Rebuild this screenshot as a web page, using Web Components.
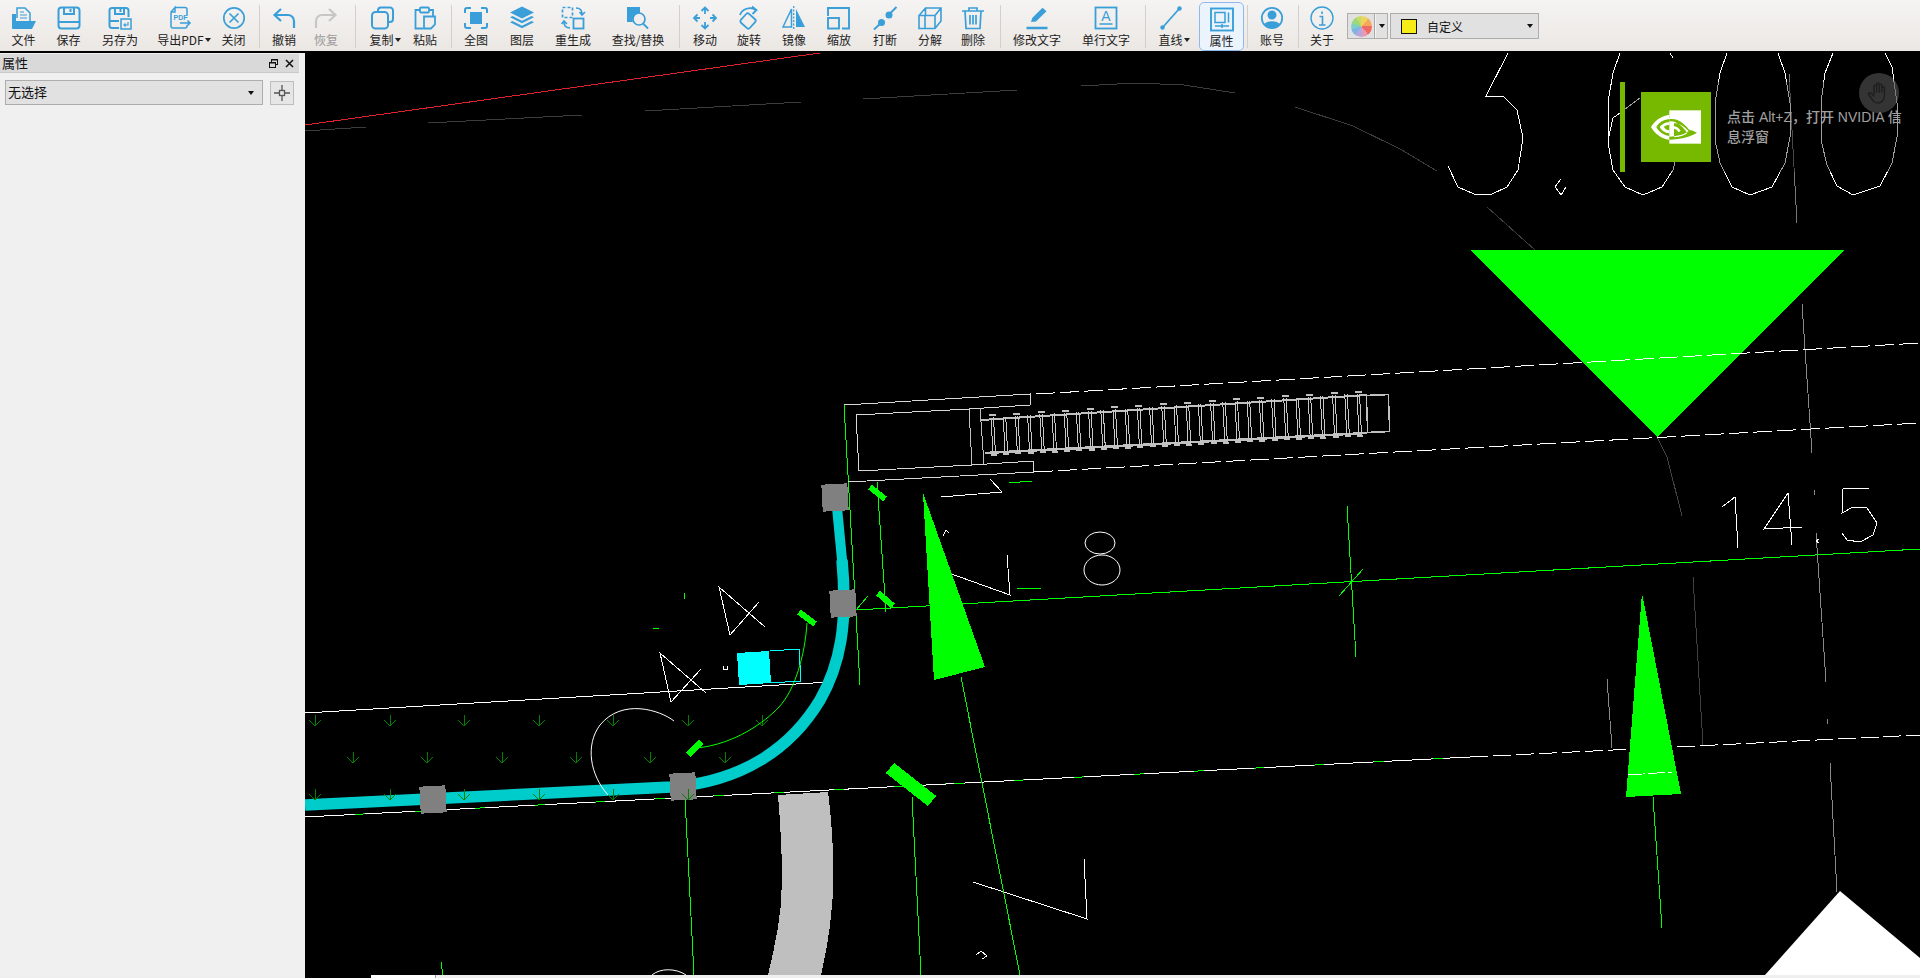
<!DOCTYPE html>
<html lang="zh">
<head>
<meta charset="utf-8">
<title>CAD</title>
<style>
html, body { margin: 0; height: 100%; overflow: hidden; background: #f0f0f0; }
body { font: 12px "Noto Sans CJK SC", "Liberation Sans", sans-serif; color: #222; display: flex; flex-direction: column; }
.main { flex: 1; display: flex; min-height: 0; }
</style>
</head>
<body>
<cad-toolbar></cad-toolbar>
<div class="main">
  <prop-panel></prop-panel>
  <cad-view></cad-view>
</div>

<script>
const ICONS = {
  file: `<path d="M7 13V3h8l5 5v8" fill="none" stroke-width="1.5"/><path d="M10 7h4M10 10h7M10 13h7" fill="none" stroke-width="1.2"/><path d="M2 9h4v7h20l-4 8H3a1 1 0 0 1-1-1z" fill="currentColor" stroke="none"/>`,
  save: `<rect x="3.5" y="2.5" width="21" height="21" rx="3" fill="none"/><path d="M9 3v6h10V3M15.5 4v3M4 17h20" fill="none"/>`,
  saveas: `<path d="M13 23H6a2.5 2.5 0 0 1-2.5-2.5v-15A2.5 2.5 0 0 1 6 3h14a2.500 2.500 0 0 1 2.500 2.500V12" fill="none"/><path d="M9 3v6h9V3M14.500 4v3M4 16h9" fill="none"/><rect x="15" y="14" width="10" height="10" fill="none" stroke-width="1.5"/><path d="M22 17v3h-4M19.500 18.500L18 20l1.500 1.500" fill="none" stroke-width="1.2"/>`,
  pdf: `<path d="M10 2.500h10a2 2 0 0 1 2 2v6M22 20v1a2 2 0 0 1-2 2H8a2 2 0 0 1-2-2V7L10 2.500V7H6" fill="none" stroke-width="1.500"/><text x="8.500" y="14.500" font-size="7" font-weight="700" font-family="Liberation Sans" fill="currentColor" stroke="none">PDF</text><path d="M15 18h10M22.500 15.500L25 18l-2.500 2.500" fill="none" stroke-width="1.500"/>`,
  close: `<circle cx="14" cy="13" r="10.200" fill="none" stroke-width="1.700"/><path d="M9.500 8.500l9 9M18.500 8.500l-9 9" fill="none" stroke-width="1.700"/>`,
  undo: `<path d="M5 10h13a6 6 0 0 1 6 6v7M11 4l-6.500 6 6.500 6" fill="none" stroke-width="2.200"/>`,
  redo: `<path d="M23 10H10a6 6 0 0 0-6 6v7M17 4l6.500 6-6.500 6" fill="none" stroke-width="2.200"/>`,
  copy: `<path d="M10 7V5.500A3 3 0 0 1 13 2.500h9a3 3 0 0 1 3 3V14a3 3 0 0 1-3 3h-1" fill="none"/><rect x="4" y="7" width="16" height="16.500" rx="3.500" fill="none"/>`,
  paste: `<path d="M12 23.500H4.500V5H9M18 5h4v6" fill="none" stroke-width="1.800"/><rect x="9" y="2.500" width="9" height="5" rx="1" fill="none" stroke-width="1.800"/><path d="M13 11.500h11v8l-4 4h-7z" fill="none" stroke-width="1.800"/>`,
  all: `<path d="M3 8V5a2 2 0 0 1 2-2h4M19 3h4a2 2 0 0 1 2 2v3M25 18v3a2 2 0 0 1-2 2h-4M9 23H5a2 2 0 0 1-2-2v-3" fill="none" stroke-width="2"/><rect x="8" y="7" width="12" height="12" fill="currentColor" stroke="none"/>`,
  layers: `<path d="M14 1.500L26 7.500 14 13.500 2 7.500z" fill="currentColor" stroke="none"/><path d="M4.500 11L14 15.800 23.500 11 26 12.300 14 18.300 2 12.300z" fill="currentColor" stroke="none"/><path d="M4.500 16L14 20.800 23.500 16 26 17.300 14 23.300 2 17.300z" fill="currentColor" stroke="none"/>`,
  regen: `<rect x="3.500" y="2.500" width="10" height="10" fill="none" stroke-dasharray="3 2" stroke-width="1.700"/><rect x="14.500" y="13.500" width="10" height="10" fill="none" stroke-width="1.800"/><path d="M17 3c4 0 6 2 6 6M20.500 7l2.500 3 3-3M11 23c-4 0-6-2-6-6M2.500 19l2.500-3 3 3" fill="none" stroke-width="1.600"/>`,
  find: `<path d="M3 2h13v6a7 7 0 0 0-7 9H3z" fill="currentColor" stroke="none"/><circle cx="15" cy="14" r="6" fill="none" stroke-width="1.700"/><path d="M19 18.500l5 5" fill="none" stroke-width="1.800"/>`,
  move: `<path d="M10.500 6L14 2.500 17.500 6M14 3v6M10.500 20L14 23.500 17.500 20M14 23v-6M6.500 9.500L3 13l3.500 3.500M3 13h6M21.500 9.500L25 13l-3.500 3.500M25 13h-6" fill="none" stroke-width="1.800"/>`,
  rotate: `<rect x="7" y="10" width="12" height="12" rx="2" transform="rotate(42 13 16)" fill="none" stroke-width="1.800"/><path d="M5 10C7 4 15 1 21 5M17 1.500L21.500 5 17.500 9" fill="none" stroke-width="1.800"/>`,
  mirror: `<path d="M11.500 4L3 22h8.500z" fill="none" stroke-width="1.500"/><path d="M16 4l9 18h-9z" fill="currentColor" stroke="none"/><path d="M13.700 1v24" fill="none" stroke-dasharray="2 1.500" stroke-width="1.300"/>`,
  scale: `<path d="M3 11V3h21v20.500h-7" fill="none" stroke-width="1.900"/><rect x="3" y="13" width="11" height="10.500" fill="none" stroke-width="1.900"/>`,
  cut: `<path d="M3 24.500l7.500-7M18 9.500L25.500 2" fill="none" stroke-width="1.900"/><circle cx="10.500" cy="17.500" r="3.500" fill="currentColor" stroke="none"/><circle cx="18" cy="10" r="3.500" fill="currentColor" stroke="none"/>`,
  split: `<path d="M3 23.500V10.500L9.500 3H25v13l-6 7.500zM3 10.500h16v13M19 10.500L25 3M9 10.500V23.500M9.500 3v7.500" fill="none" stroke-width="1.600"/>`,
  del: `<path d="M3 6h22M10 6V3h8v3M6 6l1 17.500h14L22 6M11 10v9.500M14 10v9.500M17 10v9.500" fill="none" stroke-width="1.700"/>`,
  edit: `<path d="M8 17l1.200-4L19.500 2.800l4 3.500L13 16.500z" fill="currentColor" stroke="none"/><path d="M3.500 23h21" fill="none" stroke-width="2.500"/>`,
  stext: `<rect x="3.500" y="2.500" width="21" height="21" fill="none" stroke-width="1.800"/><text x="14" y="15.500" text-anchor="middle" font-size="14" font-family="Liberation Sans" fill="currentColor" stroke="none">A</text><path d="M7.500 19h13" fill="none" stroke-width="1.500"/>`,
  line: `<path d="M6 22L22 4" fill="none" stroke-width="1.800"/><circle cx="5.500" cy="22.500" r="2.200" fill="currentColor" stroke="none"/><circle cx="22.500" cy="3.500" r="2.200" fill="currentColor" stroke="none"/>`,
  props: `<rect x="3" y="2.500" width="22" height="22" fill="none" stroke-width="1.900"/><path d="M7 6.500h10v10H7zM20.500 6.500v10M7 20h14M14 18v4" fill="none" stroke-width="1.500"/>`,
  user: `<circle cx="14" cy="13" r="10.200" fill="none" stroke-width="1.800"/><circle cx="14" cy="10" r="4.500" fill="currentColor" stroke="none"/><path d="M6 19.500c2-4.500 14-4.500 16 0a10.200 10.200 0 0 1-16 0z" fill="currentColor" stroke="none"/>`,
  info: `<circle cx="14" cy="13" r="11" fill="none" stroke-width="1.400"/><path d="M14 6.500v2.500M11.500 11.500h3V20M11 20h6.500" fill="none" stroke-width="1.600"/>`,
};

class ToolBtn extends HTMLElement {
  constructor() {
    super();
    this.attachShadow({ mode: "open" });
  }
  connectedCallback() {
    const caret = this.hasAttribute("caret") ? `<i class="caret"></i>` : "";
    // icons of drop-down buttons sit left of the label's centre
    const shift = this.getAttribute("caret") || (caret ? 6 : 0);
    this.shadowRoot.innerHTML = `
<style>
:host { display: flex; flex-direction: column; align-items: center; flex: none; height: 51px; width: ${this.getAttribute("w") || 44}px; color: #222; box-sizing: border-box; }
:host([dim]) { color: #9a9a9a; }
:host([active]) { height: 49px; margin-top: 2px; background: #ebf3fd; border: 1px solid #8fb8ee; border-radius: 5px; }
:host([active]) .ic { margin-top: 3px; }
:host([active]) .lb { margin-top: 1px; }
.ic { height: 26px; margin-top: 5px; margin-right: ${shift}px; color: #3a9fd8; }
:host([dim]) .ic { color: #c6c6c6; }
svg { display: block; width: 28px; height: 26px; stroke: currentColor; stroke-width: 2; }
.lb { margin-top: 1px; font-size: 12px; line-height: 16px; white-space: nowrap; display: flex; align-items: center; }
.caret { width: 0; height: 0; margin-left: 1px; border: 3.500px solid transparent; border-top: 4px solid #222; border-bottom: 0; }
</style>
<div class="ic"><svg viewBox="0 0 28 26">${ICONS[this.getAttribute("icon")] || ""}</svg></div>
<div class="lb"><slot></slot>${caret}</div>`;
  }
}
customElements.define("tool-btn", ToolBtn);

class ToolSep extends HTMLElement {
  constructor() {
    super();
    this.attachShadow({ mode: "open" });
    this.shadowRoot.innerHTML = `<style>:host { display: block; flex: none; width: 1px; height: 43px; margin-top: 5px; background: #d3d0cc; }</style>`;
  }
}
customElements.define("tool-sep", ToolSep);

class ColorPick extends HTMLElement {
  constructor() {
    super();
    this.attachShadow({ mode: "open" });
    this.shadowRoot.innerHTML = `
<style>
:host { display: flex; flex: none; align-items: center; box-sizing: border-box; width: 41px; height: 26px; margin: 13px 0 0 2px; background: #e1e1e1; border: 1px solid #adadad; }
.wheel { width: 21px; height: 21px; margin-left: 3px; border-radius: 50%;
  background: conic-gradient(#ecd45e 0 40deg, #f5a85a 40deg 90deg, #ef6a62 90deg 140deg, #e69ab2 140deg 175deg, #b9a5dc 175deg 215deg, #7fb5e6 215deg 255deg, #7fd0c0 255deg 290deg, #9fd87a 290deg 330deg, #c6dc66 330deg 360deg); }
.div { width: 1px; height: 24px; margin-left: 2px; background: #f4f4f4; border-left: 1px solid #a8a8a8; }
.caret { width: 0; height: 0; margin-left: 3px; border: 3.500px solid transparent; border-top: 4px solid #111; border-bottom: 0; }
</style>
<div class="wheel"></div><div class="div"></div><div class="caret"></div>`;
  }
}
customElements.define("color-pick", ColorPick);

class ColorCombo extends HTMLElement {
  constructor() {
    super();
    this.attachShadow({ mode: "open" });
    this.shadowRoot.innerHTML = `
<style>
:host { display: flex; flex: none; align-items: center; box-sizing: border-box; width: 149px; height: 26px; margin: 13px 0 0 2px; background: #e1e1e1; border: 1px solid #adadad; font-size: 12px; color: #111; }
.sw { box-sizing: border-box; width: 16px; height: 15px; margin-left: 10px; background: #f5ec18; border: 1px solid #111; }
.tx { margin-left: 10px; flex: 1; }
.caret { width: 0; height: 0; margin-right: 5px; border: 3.500px solid transparent; border-top: 4px solid #111; border-bottom: 0; }
</style>
<div class="sw"></div><div class="tx"><slot></slot></div><div class="caret"></div>`;
  }
}
customElements.define("color-combo", ColorCombo);

class CadToolbar extends HTMLElement {
  constructor() {
    super();
    this.attachShadow({ mode: "open" });
    const b = (icon, w, label, extra = "") => `<tool-btn icon="${icon}" w="${w}" ${extra}>${label}</tool-btn>`;
    const sep = (l, r) => `<tool-sep style="margin-left:${l}px;margin-right:${r}px"></tool-sep>`;
    this.shadowRoot.innerHTML = `
<style>
:host { display: flex; flex: none; height: 51px; border-bottom: 2px solid #000; background: linear-gradient(#f5f4f3, #ebe7e3); overflow: hidden; }
</style>
${b("file", 47, "文件")}${b("save", 43, "保存")}${b("saveas", 60, "另存为")}${b("pdf", 68, "导出PDF", 'caret="10"')}${b("close", 31, "关闭")}
${sep(10, 0)}
${b("undo", 48, "撤销")}${b("redo", 36, "恢复", "dim")}
${sep(11, 6)}
${b("copy", 46, "复制", "caret")}${b("paste", 34, "粘贴")}
${sep(9, 0)}
${b("all", 48, "全图")}${b("layers", 44, "图层")}${b("regen", 58, "重生成")}${b("find", 72, "查找/替换")}
${sep(5, 3)}
${b("move", 44, "移动")}${b("rotate", 44, "旋转")}${b("mirror", 46, "镜像")}${b("scale", 44, "缩放")}${b("cut", 48, "打断")}${b("split", 42, "分解")}${b("del", 44, "删除")}
${sep(5, 0)}
${b("edit", 72, "修改文字")}${b("stext", 66, "单行文字")}
${sep(6, 4)}
${b("line", 48, "直线", "caret")}
<span style="width:1px"></span>${b("props", 45, "属性", "active")}
${sep(3, 0)}
${b("user", 48, "账号")}
${sep(2, 0)}
${b("info", 46, "关于")}
<color-pick></color-pick><color-combo>自定义</color-combo>`;
  }
}
customElements.define("cad-toolbar", CadToolbar);

class PropPanel extends HTMLElement {
  constructor() {
    super();
    this.attachShadow({ mode: "open" });
    this.shadowRoot.innerHTML = `
<style>
:host { display: block; flex: none; width: 305px; background: #f0f0f0; box-sizing: border-box; padding-top: 1px; }
.head { display: flex; align-items: center; box-sizing: border-box; height: 19px; margin-right: 6px; background: #d9d9d9; border-bottom: 1px solid #c8c8c8; padding: 0 4px 0 2px; font-size: 13px; line-height: 16px; color: #111; }
.head span { flex: 1; }
.head svg { display: block; margin-left: 5px; }
.row { display: flex; margin: 7px 0 0 5px; }
.combo { display: flex; align-items: center; box-sizing: border-box; width: 258px; height: 25px; background: #e1e1e1; border: 1px solid #adadad; padding: 0 8px 2px 2px; font-size: 13px; line-height: 16px; color: #111; }
.combo span { flex: 1; }
.caret { width: 0; height: 0; margin-top: 2px; border: 3.500px solid transparent; border-top: 4px solid #111; border-bottom: 0; }
.pick { display: flex; align-items: center; justify-content: center; box-sizing: border-box; width: 24px; height: 24px; margin: 1px 0 0 7px; background: #e6e6e6; border: 1px solid #bdbdbd; }
</style>
<div class="head"><span>属性</span>
  <svg width="11" height="11" viewBox="0 0 11 11" fill="none" stroke="#111"><rect x="3.500" y="1.500" width="6" height="5"/><rect x="1.500" y="4.500" width="6" height="5" fill="#d9d9d9"/><path d="M3 2h6M1 5h6" stroke-width="1"/></svg>
  <svg width="11" height="11" viewBox="0 0 11 11" fill="none" stroke="#111" stroke-width="1.500"><path d="M2 2l7 7M9 2l-7 7"/></svg>
</div>
<div class="row">
  <div class="combo"><span>无选择</span><div class="caret"></div></div>
  <div class="pick"><svg width="16" height="16" viewBox="0 0 16 16" fill="none" stroke="#555" stroke-width="1.300"><rect x="5.500" y="5.500" width="5" height="5"/><path d="M8 0v5M8 11v5M0 8h5M11 8h5"/></svg></div>
</div>`;
  }
}
customElements.define("prop-panel", PropPanel);

class NvToast extends HTMLElement {
  constructor() {
    super();
    this.attachShadow({ mode: "open" });
    this.shadowRoot.innerHTML = `
<style>
:host { position: absolute; left: 1315px; top: 29px; width: 300px; height: 90px; display: flex; background: rgba(0,0,0,.38); }
.bar { width: 5px; height: 90px; background: #76b900; flex: none; }
.logo { width: 70px; height: 70px; margin: 10px 0 0 16px; flex: none; }
.tx { width: 186px; margin: 25px 0 0 16px; color: #a0a0a0; font: 500 14px/20px "Liberation Sans", "Noto Sans CJK SC", sans-serif; }
.hand { position: absolute; left: 239px; top: -9px; width: 40px; height: 40px; border-radius: 50%; background: rgba(95,95,95,.55); display: flex; align-items: center; justify-content: center; }
</style>
<div class="bar"></div>
<svg class="logo" viewBox="0 0 210 210">
  <rect width="210" height="210" fill="#76b900"/>
  <rect x="85" y="55" width="95" height="100" fill="#fff"/>
  <path d="M85 68C58 72 40 88 30 105c10 18 30 36 55 38v-11c-20-3-34-16-39-27 6-11 20-22 39-24z" fill="#fff"/>
  <path d="M85 90c-14 1-24 8-29 15 5 10 16 18 29 19v-9c-8-1-14-5-16-10 3-4 8-6 16-6z" fill="#fff"/>
  <path d="M85 68v14c24-4 42 10 58 30 3 3 5 4 9 3l16 7c-20 12-50 20-83 21v-9c24-1 46-7 58-16-12-14-30-27-44-24v9c8 0 15 6 20 13l-6 5c-5-7-8-10-14-11v26c20-2 34-7 40-13-12-16-30-38-54-35z" fill="#76b900"/>
</svg>
<div class="tx">点击 Alt+Z，打开 NVIDIA 信息浮窗</div>
<div class="hand"><svg width="28" height="28" viewBox="0 0 28 28" fill="none" stroke="#1e1e1e" stroke-width="1.400" stroke-linejoin="round" stroke-linecap="round"><path d="M9 15V7.500a1.300 1.300 0 0 1 2.600 0V13M11.600 12V5.500a1.300 1.300 0 0 1 2.600 0V13M14.200 12V6.500a1.300 1.300 0 0 1 2.600 0V13M16.800 13V9a1.300 1.300 0 0 1 2.600 0v8c0 4-3 7-6.500 7-3 0-4.500-1.500-6-4L3.500 15.500c-.8-1.300 1-2.500 2.200-1.500L9 17"/></svg></div>`;
  }
}
customElements.define("nv-toast", NvToast);

class CadView extends HTMLElement {
  constructor() {
    super();
    this.attachShadow({ mode: "open" });
    const poly = (pts, c = "#fff", w = 1, extra = "") => `<polyline points="${pts}" fill="none" stroke="${c}" stroke-width="${w}" ${extra}/>`;
    const dash = 'stroke-dasharray="19 5"';

    // grass arrows in three rows
    let arrows = "";
    const grass = (y, xs) => xs.forEach(x => {
      arrows += `<path d="M${x} ${y - 5}v11M${x - 6} ${y}l6 6 6-6" fill="none" stroke="#008000"/>`;
    });
    grass(720, [315, 390, 464, 539, 613, 688, 762]);
    grass(757, [353, 427, 502, 576, 650, 725]);
    grass(794, [315, 390, 464, 539, 613, 688]);

    // screw teeth, rails are drawn separately
    let teeth = "";
    for (let i = 0; i < 31; i++) {
      const x = 991 + i * 12.2;
      const top = 419 - (x - 981) * 0.065;
      const bot = 453 - (x - 985) * 0.052;
      teeth += `<path d="M${x} ${top - 1}L${x + 2} ${bot + 2}M${x + 2.500} ${top - 1}L${x + 4.500} ${bot + 1}" fill="none" stroke="#c8c8c8"/>`;
      teeth += `<rect x="${x}" y="${bot + 1}" width="6" height="2" fill="#c0c0c0"/>`;
      if (i % 2 === 0) teeth += `<rect x="${x - 2}" y="${top - 4}" width="7" height="2" fill="#c0c0c0"/>`;
    }

    this.shadowRoot.innerHTML = `
<style>
:host { display: flex; flex-direction: column; flex: 1; position: relative; background: #000; min-width: 0; }
svg.draw { display: block; flex: 1; min-height: 0; width: 100%; background: #000; }
.strip { flex: none; height: 3px; margin-left: 66px; display: flex; background: #f0f0f0; }
.strip b { display: block; width: 64px; height: 3px; background: #fff; border-right: 1px solid #999; }
</style>
<svg class="draw" viewBox="305 53 1615 922" preserveAspectRatio="none" shape-rendering="crispEdges">
  <!-- dim construction arcs -->
  ${poly("305,131 366,127", "#3c3c3c")}${poly("428,123 582,115", "#3c3c3c")}${poly("645,111 801,102", "#3c3c3c")}${poly("863,99 1017,90", "#3c3c3c")}
  ${poly("1081,86 1136,83 1184,85 1235,93", "#3c3c3c")}${poly("1295,107 1353,126 1400,149 1437,171", "#3c3c3c")}${poly("1487,207 1535,250", "#3c3c3c")}
  ${poly("1657,437 1667,457 1682,516", "#444")}${poly("1693,577 1703,745", "#404040")}
  ${poly("1789,74 1797,223", "#777")}${poly("1802,304 1812,453", "#888")}${poly("1814,490 1814,495", "#888")}${poly("1816,533 1826,682", "#888")}${poly("1827,719 1827,724", "#888")}${poly("1830,763 1837,892", "#888")}${poly("1607,679 1612,748", "#888")}
  <polyline points="305,125 820,53" fill="none" stroke="#e0202c"/>

  <!-- big digits -->
  ${poly("1508,53 1486,96 1503,96 1517,110 1523,138 1518,170 1507,187 1492,194 1474,194 1458,187 1448,166")}
  ${poly("1620,53 1613,73 1608,102 1608,143 1613,170 1625,187 1643,195 1662,187 1673,170 1678,150")}${poly("1670,53 1673,58")}${poly("1640,98 1613,118 1608,140")}
  ${poly("1727,53 1720,73 1715,103 1715,140 1720,163 1732,187 1750,195 1772,187 1785,163 1790,137 1790,103 1785,73 1778,53")}
  ${poly("1833,53 1825,73 1821,103 1821,140 1827,165 1837,186 1853,195 1880,186 1892,163 1897,137 1897,103 1892,67 1885,53")}
  ${poly("1561,179 1555,187 1561,195 1566,187")}
  ${poly("1722,507 1735,497 1738,548")}${poly("1788,493 1764,529 1802,527")}${poly("1788,493 1792,545")}
  ${poly("1869,488 1843,489 1842,513 1853,507 1867,508 1877,523 1873,535 1860,542 1847,540 1842,533")}${poly("1819,539 1816,541 1819,543")}
  <ellipse cx="1100" cy="543" rx="15" ry="11" fill="none" stroke="#fff" shape-rendering="auto"/><ellipse cx="1102" cy="570" rx="18" ry="15" fill="none" stroke="#fff" shape-rendering="auto"/>
  ${poly("946,572 1010,595 1007,555")}${poly("943,536 946,530 949,533")}${poly("941,497 1002,492 990,479")}
  ${poly("973,882 1087,919 1084,859")}${poly("976,955 981,951 987,956 982,959")}
  <path d="M652 975c8-7 24-7 34 0" fill="none" stroke="#fff" shape-rendering="auto"/>

  <!-- gray band -->
  <path d="M778 795L828 792C833 830 835 880 832 905C830 935 825 955 821 975H768C775 945 782 915 782 880C782 850 780 820 778 795Z" fill="#bfbfbf"/>

  <!-- lines of the road -->
  ${poly("305,713 830,682")}
  ${poly("856,610 1920,549", "#0f0")}
  ${poly("305,817 1470,757", "#0f0")}
  ${poly("305,817 1470,757", "#fff", 1, 'stroke-dasharray="50 10"')}
  ${poly("1470,757 1920,735", "#fff", 1, 'stroke-dasharray="18 5"')}
  ${poly("685,798 694,975", "#0f0")}${poly("912,797 921,975", "#0f0")}${poly("844,405 860,685", "#0f0")}${poly("877,482 886,612", "#0f0")}
  ${poly("1347,506 1356,657", "#0f0")}${poly("1339,596 1363,569", "#0f0")}${poly("843,625 868,596", "#0f0")}
  ${poly("1017,589 1041,588", "#0f0")}${poly("1009,483 1032,481", "#0f0")}${poly("441,962 443,975", "#0f0")}
  ${poly("961,677 1020,975", "#0f0")}${poly("1653,797 1662,928", "#0f0")}
  ${poly("684,593 684,599", "#0f0")}${poly("653,629 659,628", "#0f0")}

  <!-- pipe and joints -->
  <path d="M305 805L671 787C740 782 790 750 820 700C840 665 848 625 842 560" fill="none" stroke="#00cccc" stroke-width="11.500" shape-rendering="auto"/>
  <path d="M843 570L836 497" fill="none" stroke="#00cccc" stroke-width="10" shape-rendering="auto"/>
  ${[[433, 799], [683, 786], [843, 603], [835, 497]].map(([x, y]) => `<rect x="${x - 13}" y="${y - 13}" width="26" height="27" fill="#808080" transform="rotate(-3 ${x} ${y})"/>`).join("")}
  ${arrows}

  <!-- small marks -->
  <path d="M870 487L885 499M878 593L893 606M799 612L815 624M688 755L701 742" fill="none" stroke="#0f0" stroke-width="6"/>
  <path d="M890 768L932 801" fill="none" stroke="#0f0" stroke-width="13"/>
  <path d="M697 748C735 744 765 722 779 707C795 690 805 655 807 623" fill="none" stroke="#0f0" shape-rendering="auto"/>
  <polygon points="737,653 769,651 771,683 739,685" fill="#0ff"/>
  ${poly("770,651 799,649 801,681 770,683", "#0ff")}
  ${poly("759,602 730,635 719,587 765,627")}${poly("701,669 671,702 660,653 706,693")}${poly("723,666 723,669 727,669 727,666")}
  <path d="M674 721C660 710 622 698 600 725C585 745 590 775 608 795" fill="none" stroke="#fff" shape-rendering="auto"/>

  <!-- screw assembly -->
  ${poly("844,405 1030,394 1030,405 969,409 856,415 859,471 972,465 1033,461 1034,472 848,482", "#d8d8d8")}
  ${poly("969,409 972,465", "#c0c0c0")}${poly("980,408 984,464", "#c0c0c0")}
  ${poly("981,420 1367,395", "#c0c0c0", 2)}${poly("985,453 1367,433", "#c0c0c0", 2.500)}
  ${teeth}
  <rect x="1367" y="395" width="22" height="37" fill="none" stroke="#c0c0c0" stroke-width="1.500" transform="rotate(-2 1378 413)"/>

  <!-- big markers -->
  <polygon points="923,493 934,680 985,667" fill="#0f0"/>
  <polygon points="1642,593 1626,797 1681,794" fill="#0f0"/>
  <polygon points="1470,250 1844,250 1657,437" fill="#0f0"/>
  ${poly("1036,394 1920,343", "#fff", 1, dash)}
  ${poly("1034,472 1920,423", "#fff", 1, dash)}
  ${poly("1628,775 1672,772", "#fff", 1, 'stroke-dasharray="17 3"')}
  <polygon points="1840,891 1765,975 1920,975 1920,958" fill="#fff" shape-rendering="auto"/>
</svg>
<div class="strip"><b></b></div>
<nv-toast></nv-toast>`;
  }
}
customElements.define("cad-view", CadView);
</script>
</body>
</html>
